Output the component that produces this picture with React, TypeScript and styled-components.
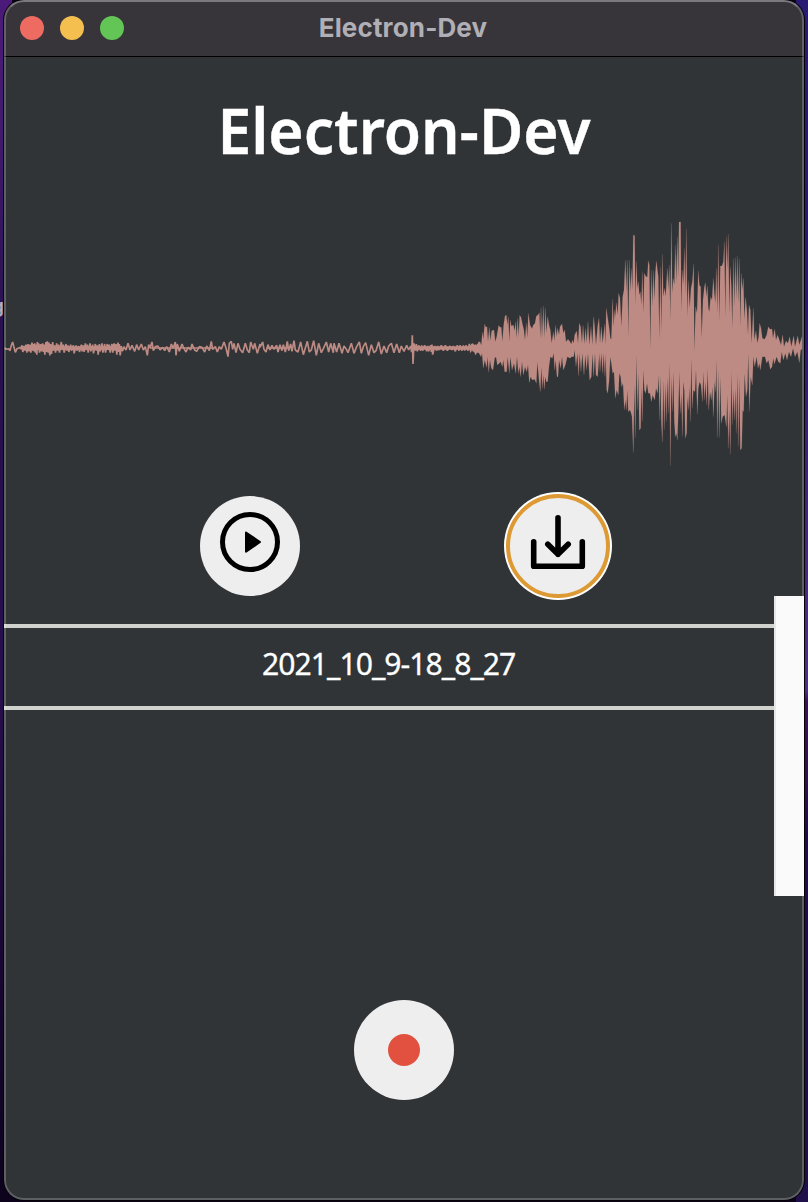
import React from "react";
import styled, { createGlobalStyle } from "styled-components";

const GlobalStyle = createGlobalStyle`
  * { box-sizing: border-box; }
  body { margin: 0; }
`;

const Desktop = styled.div`
  position: relative;
  width: 808px;
  height: 1202px;
  padding: 0 4px;
  overflow: hidden;
  background:
    linear-gradient(#4b1a7a 0, #42196e 130px, #28104f 330px, #260d4b 700px, #16062f 1000px, #0d031c 1202px) left / 12px 100% no-repeat,
    linear-gradient(#291a73 0, #2b1773 300px, #41247c 500px, #4e2f88 690px, #3a1058 702px, #32104f 780px, #200a4c 830px, #20104a 1202px) right / 12px 100% no-repeat,
    #0d031c;
`;

const BackgroundText = styled.span`
  position: absolute;
  left: -8px;
  top: 297px;
  font: 600 19px/20px Inter, sans-serif;
  color: #b5aebd;
`;

const Window = styled.main`
  position: relative;
  display: flex;
  flex-direction: column;
  width: 800px;
  height: 1200px;
  border-radius: 20px;
  overflow: hidden;
  background: #303437;
  box-shadow: 0 0 0 1px #050308;
  &::after {
    content: "";
    position: absolute;
    inset: 0;
    border: 2px solid rgba(255, 255, 255, 0.22);
    border-top-color: rgba(255, 255, 255, 0.34);
    border-radius: 20px;
    pointer-events: none;
  }
`;

const TitleBar = styled.header`
  flex: none;
  display: grid;
  grid-template-columns: 1fr auto 1fr;
  align-items: center;
  height: 57px;
  padding: 0 16px;
  background: #37343a;
  border-bottom: 1px solid #000;
`;

const Lights = styled.div`
  display: flex;
  gap: 16px;
`;

const Light = styled.span<{ $color: string }>`
  width: 24px;
  height: 24px;
  border-radius: 50%;
  background: ${(p) => p.$color};
`;

const WindowTitle = styled.span`
  font: 700 26px/30px Inter, sans-serif;
  letter-spacing: 0.15px;
  margin: -1px 2px 0 0;
  color: #b1afb6;
`;

const Heading = styled.h1`
  flex: none;
  height: 153px;
  margin: 0;
  padding-top: 29px;
  text-align: center;
  font: 600 63px/88px "Noto Sans", sans-serif;
  color: #fff;
  transform: scaleX(0.96);
  -webkit-text-stroke: 0.4px #fff;
`;

const Wave = styled.svg`
  flex: none;
  display: block;
  width: 800px;
  height: 256px;
`;

const Controls = styled.div`
  flex: none;
  display: flex;
  justify-content: center;
  gap: 208px;
  margin-top: 30px;
`;

const RoundButton = styled.button<{ $focused?: boolean }>`
  display: flex;
  align-items: center;
  justify-content: center;
  width: 100px;
  height: 100px;
  padding: 0 0 8px;
  border: 0;
  border-radius: 50%;
  background: #eee;
  outline: ${(p) => (p.$focused ? "4px solid #dd9933" : "none")};
  outline-offset: -2px;
  box-shadow: ${(p) => (p.$focused ? "0 0 0 4px #fff" : "none")};
`;

const Recordings = styled.section`
  flex: none;
  display: flex;
  height: 300px;
`;

const RecordingList = styled.ul`
  flex: 1;
  margin: 0;
  padding: 28px 0 0;
  list-style: none;
`;

const Recording = styled.li`
  height: 86px;
  border: solid #d0d3cd;
  border-width: 4px 0;
  text-align: center;
  font: 400 31.5px/70px "Noto Sans", sans-serif;
  color: #fff;
`;

const RecordingName = styled.span`
  display: inline-block;
  letter-spacing: -1px;
  transform: scaleX(0.955);
  -webkit-text-stroke: 0.3px #fff;
`;

const ScrollTrack = styled.div`
  width: 30px;
  background: #fafafa;
  border-left: 2px solid #e7e7e7;
  position: relative;
  z-index: 1;
`;

const RecordRow = styled.footer`
  display: flex;
  justify-content: center;
  margin-top: 104px;
`;

const RecordButton = styled(RoundButton)`
  padding: 0;
`;

const RecordDot = styled.span`
  width: 32px;
  height: 32px;
  border-radius: 50%;
  background: #e25140;
`;

/* Samples are in thirds of a pixel. Quiet passages are one thin trace. */
const INTRO = "14,84 20,88 26,86 30,92 34,76 38,66 42,82 46,97 51,86 56,84 60,84";
const DENSE =
  "60,80,88 66,76,96 72,78,92 78,74,98 84,72,94 90,74,98 96,68,92 100,72,94 104,70,98 108,74,104 112,66,90 116,70,98 122,72,94 128,70,96 132,74,104 138,66,96 142,64,98 147,68,106 152,72,102 158,66,92 164,76,98 170,70,92 176,74,98 184,66,90 190,74,98 198,72,92 204,76,96 212,74,92 220,76,100 228,76,92 236,78,96 244,74,94 250,76,96 256,70,90 262,74,98 270,70,94 278,74,100 286,72,92 292,76,104 298,72,94 306,70,98 314,72,98 322,72,90 328,74,98 336,72,98 342,70,92 348,72,104 354,68,96 358,72,106 364,78,92";
const QUIET_A =
  "368,92 372,80 378,90 384,70 390,90 396,76 404,94 410,74 416,90 424,72 430,90 436,80 442,106 446,74 450,84 456,66 460,92 466,80 474,78 480,90 488,82 494,92 500,80 508,96 514,72 520,84 526,66 528,106 532,72 538,94 546,72 552,86 558,96 564,82 572,90 576,72 584,90 590,94 598,80 606,82 614,96 620,78 628,92 634,64 638,88 646,80 652,96 658,80 664,88 672,66 678,84 684,110 688,70 694,64 698,88 702,70 708,98 714,70 720,88 728,98 736,70 742,90 748,98 752,66 760,88 764,70 772,100 780,72";
const QUIET_B =
  "0,82 8,66 12,88 18,96 24,74 30,90 36,76 42,88 50,76 54,96 60,74 66,92 70,74 76,96 82,64 86,92 92,72 96,94 102,62 106,90 114,96 122,66 130,104 136,84 142,64 148,96 154,90 161,62 169,106 176,70 184,98 190,86 199,66 206,96 212,70 220,98 222,70 230,96 237,70 246,100 252,78 258,86 264,98 274,70 282,100 290,80 298,66 304,100 310,80 317,68 326,106 334,74 342,98 348,92 356,66 364,102 372,78 380,98 386,78 394,70 402,98 410,72 418,98 424,78 432,94 440,76 446,90 452,78 455,96 457,46 459,132 462,70 466,92 469,72 472,94 476,76 482,92 485,76 488,92 494,76 500,94 503,78 506,94 512,76 514,96 516,74 518,104 524,78 530,92 533,78 536,90 544,76 550,92 556,76 562,92 570,78 576,90 580,78 586,94 592,76 597,92 600,76 606,92 610,76 614,92 618,76 624,92 628,72 632,94 636,72 640,94 646,74 652,98 658,66 664,100 668,80";

const TOP_A =
  "0,408 8,400 16,408 22,402 28,396 34,405 37,366 40,388 44,342 47,352 51,350 54,395 58,352 61,392 65,362 72,360 76,395 80,380 86,346 90,352 94,352 97,395 101,345 105,318 109,315 112,345 115,320 118,395 121,330 124,348 130,345 134,362 137,335 140,385 143,325 146,380 149,316 153,322 158,345 161,356 165,390 169,340 172,385 175,310 180,345 186,356 190,345 195,340 199,318 204,315 208,308 211,385 213,292 216,385 220,288 223,385 226,293 229,370 233,320 237,345 241,360 245,400 250,365 253,392 257,346 260,380 263,355 267,375 270,350 276,342 280,370 284,360 288,395 294,388 300,395 304,403 307,390 311,400 314,375 320,363 324,400 328,340 332,350 336,400 339,345 343,402 347,355 350,400 354,335 358,405 363,350 367,405 371,320 374,350 378,405 383,348 387,325";
const TOP_B =
  "0,400 4,350 8,400 14,342 16,405 19,295 24,330 28,358 31,385 34,388 38,268 41,350 44,300 46,320 49,278 53,315 56,250 60,265 64,350 68,260 72,240 76,150 79,245 82,150 85,385 88,150 91,245 94,175 97,240 100,75 104,77 106,285 109,153 112,235 115,215 118,255 121,245 124,285 127,185 130,310 133,190 138,200 142,200 145,152 148,165 151,420 154,180 157,290 160,180 163,270 166,190 169,153 173,185 175,200 178,390 181,170 184,365 187,132 190,260 194,235 197,260 202,175 205,240 208,165 211,330 214,40 217,250 220,205 223,225 226,105 229,220 232,80 235,200 237,36 242,36 244,305 247,180 250,225 253,115 256,250 259,57 262,320 265,212 269,295 273,235 277,215 281,162 283,425 287,290 291,310 295,182 298,225 302,230 305,385 309,270 313,232 316,218 319,260 322,228 325,295 328,305 332,260 336,270 340,205 343,250 346,280 349,175 352,310 355,105 358,332 361,168 366,168 370,155 373,95 376,320 379,80 382,180 385,72 388,310 391,170 394,230 397,355 400,146 403,290 406,143 409,270 412,137 415,280 418,147 421,350 424,190 427,240 430,205 433,330 437,262 441,305 444,375 447,285 451,300 455,400 460,295 463,390 468,362 472,400 476,380 479,340 483,355 487,385 494,388 500,375 505,350 510,358 516,357 519,385 524,358 528,390 533,375 538,390 543,405 548,375 552,410 558,393 564,400 569,380 574,410 581,378 585,410 588,400 593,378 598,405 606,380";
const BOTTOM_A =
  "0,430 6,420 12,425 17,436 22,425 27,430 33,440 36,430 40,475 44,450 50,472 53,440 56,487 60,450 64,475 69,480 74,445 78,440 82,465 88,460 92,455 97,470 100,450 104,485 110,485 113,440 118,490 121,440 126,480 132,460 137,490 141,440 145,490 148,470 152,500 156,455 160,495 165,470 170,485 174,465 178,518 182,500 187,510 194,508 199,520 202,455 207,510 211,545 214,470 217,535 220,495 223,538 226,500 229,515 233,515 237,470 241,440 247,445 251,430 254,480 257,450 261,500 264,500 267,450 272,475 276,440 280,480 286,465 292,440 300,445 305,440 311,440 314,420 318,470 322,430 326,498 329,430 333,485 337,430 342,495 346,435 350,480 354,430 359,510 364,500 368,430 371,500 375,430 378,495 383,500 388,430";
const BOTTOM_B =
  "0,485 4,430 8,490 11,430 15,500 17,430 20,540 23,550 27,515 31,440 34,460 38,490 42,485 46,565 50,540 55,555 58,490 62,500 65,530 69,520 73,600 76,570 79,600 82,540 85,605 90,600 93,608 96,620 100,728 103,525 106,683 109,435 112,600 115,490 118,660 122,655 124,530 127,635 130,480 133,540 137,550 141,520 145,550 150,550 154,575 158,555 164,570 168,535 173,550 176,495 179,630 181,495 184,635 187,697 190,510 193,660 196,520 199,635 202,500 205,610 208,460 211,768 214,500 217,605 220,485 223,635 226,680 229,670 232,690 235,605 238,485 241,610 244,550 247,680 250,515 253,540 256,685 260,670 262,560 265,600 268,530 271,635 274,445 277,595 280,540 285,545 288,480 292,612 295,535 299,515 303,525 307,575 310,485 313,570 316,515 320,585 323,475 326,600 330,545 334,570 337,530 340,620 344,515 347,545 349,450 352,683 355,480 358,683 361,500 364,640 368,620 374,615 379,650 382,555 385,715 388,600 391,733 394,485 397,645 400,540 403,630 406,535 409,670 412,490 415,710 418,500 421,720 425,715 428,600 431,605 434,490 438,560 442,540 445,430 448,605 452,500 457,525 460,440 464,470 470,440 474,475 478,460 481,480 487,440 495,440 500,460 505,450 511,478 516,470 520,445 523,462 530,440 535,455 541,460 545,425 550,450 556,430 561,450 567,425 573,440 579,415 585,440 592,425 598,458 602,420 606,418";

const parse = (s: string, dx: number, dy: number) =>
  s.split(" ").map((p) => {
    const [x, y] = p.split(",").map(Number);
    return [x + dx, y + dy];
  });

const denseSpans = DENSE.split(" ").map((p) => p.split(",").map(Number));

const trace = [
  ...parse(INTRO, 0, 330),
  ...denseSpans.flatMap(([x, top, bottom]) => [[x, top + 330], [x + 2.5, bottom + 330]]),
  ...parse(QUIET_A, 0, 330),
  ...parse(QUIET_B, 780, 330),
].join(" ");

const body = [
  ...parse(TOP_A, 1410, 0),
  ...parse(TOP_B, 1800, 0),
  ...[...parse(BOTTOM_A, 1410, 0), ...parse(BOTTOM_B, 1800, 0)].reverse(),
].join(" ");

const Waveform = () => (
  <Wave viewBox="12 0 2400 768" fill="#bd8b84">
    <polyline points={trace} fill="none" stroke="#bd8b84" strokeWidth="5" strokeLinejoin="bevel" />
    <path d="M66 414H364M1240 414H1446" stroke="#bd8b84" strokeWidth="11" />
    <path d="M450 414H640M800 414H870" stroke="#bd8b84" strokeWidth="5" />
    <polygon points={body} stroke="#bd8b84" strokeWidth="0.4" />
  </Wave>
);

const PlayIcon = () => (
  <svg width="60" height="60" viewBox="0 0 60 60">
    <circle cx="30" cy="30" r="27.5" fill="none" stroke="#000" strokeWidth="5" />
    <path d="M26 20.5 40 30 26 39.8Z" stroke="#000" strokeWidth="2" strokeLinejoin="round" />
  </svg>
);

const DownloadIcon = () => (
  <svg width="60" height="60" viewBox="0 0 60 60" fill="none" stroke="#000" strokeWidth="5.6" strokeLinecap="round" strokeLinejoin="round">
    <path d="M30 5.7V42.2M19.8 32.3 30 42.2 40.2 32.3M5.7 29.8V54.3H54.3V29.8" />
  </svg>
);

export default function App() {
  return (
    <Desktop>
      <GlobalStyle />
      <BackgroundText>g</BackgroundText>
      <Window>
        <TitleBar>
          <Lights>
            <Light $color="#ed6b60" />
            <Light $color="#f5bf50" />
            <Light $color="#62c556" />
          </Lights>
          <WindowTitle>Electron-Dev</WindowTitle>
        </TitleBar>
        <Heading>Electron-Dev</Heading>
        <Waveform />
        <Controls>
          <RoundButton aria-label="Play"><PlayIcon /></RoundButton>
          <RoundButton aria-label="Download" $focused><DownloadIcon /></RoundButton>
        </Controls>
        <Recordings>
          <RecordingList>
            <Recording><RecordingName>2021_10_9-18_8_27</RecordingName></Recording>
          </RecordingList>
          <ScrollTrack />
        </Recordings>
        <RecordRow>
          <RecordButton aria-label="Record"><RecordDot /></RecordButton>
        </RecordRow>
      </Window>
    </Desktop>
  );
}
